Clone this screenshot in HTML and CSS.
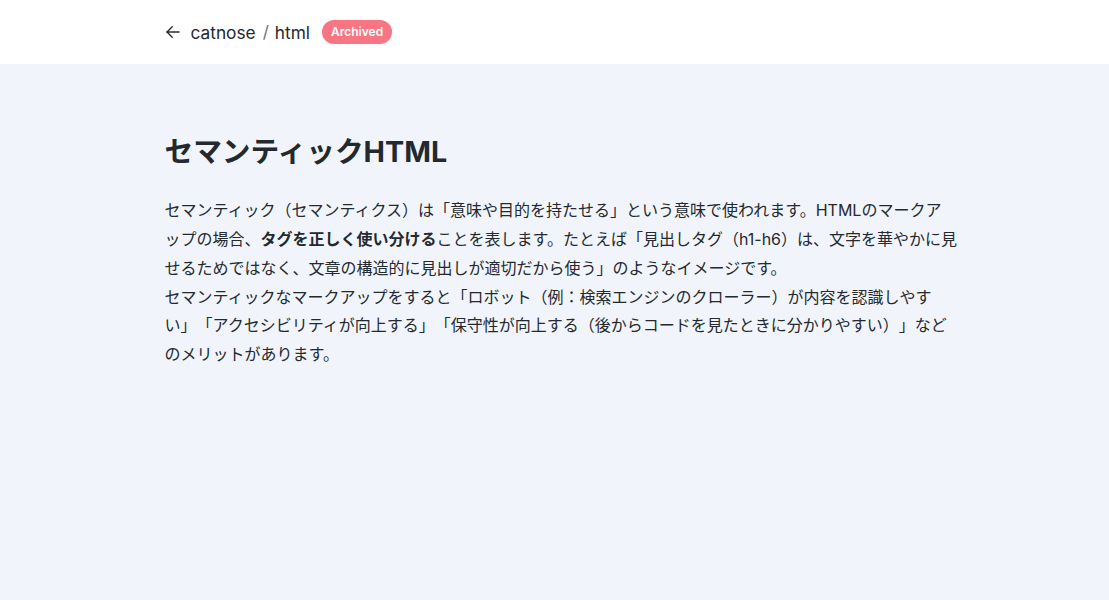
FILE: index.html
```html
<!DOCTYPE html>
<html lang="ja">
<head>
<meta charset="utf-8">
<title>セマンティックHTML</title>
<link rel="stylesheet" href="styles.css">
</head>
<body>
<header class="header">
  <div class="container header-inner">
    <a class="back" href="#" aria-label="back">
      <svg width="18" height="18" viewBox="0 0 24 24" fill="none" stroke="currentColor" stroke-width="1.8" stroke-linecap="round" stroke-linejoin="round"><path d="M20 12H4"/><path d="M11 19l-7-7 7-7"/></svg>
    </a>
    <span class="crumb">catnose</span>
    <span class="sep">/</span>
    <span class="crumb">html</span>
    <span class="badge">Archived</span>
  </div>
</header>
<main class="main">
  <div class="container">
    <h1 class="title">セマンティックHTML</h1>
    <div class="body">
      <p>セマンティック（セマンティクス）は「意味や目的を持たせる」という意味で使われます。HTMLのマークアップの場合、<strong>タグを正しく使い分ける</strong>ことを表します。たとえば「見出しタグ（h1-h6）は、文字を華やかに見せるためではなく、文章の構造的に見出しが適切だから使う」のようなイメージです。</p>
      <p>セマンティックなマークアップをすると「ロボット（例：検索エンジンのクローラー）が内容を認識しやすい」「アクセシビリティが向上する」「保守性が向上する（後からコードを見たときに分かりやすい）」などのメリットがあります。</p>
    </div>
  </div>
</main>
</body>
</html>
```
FILE: styles.css
```css
html, body { margin: 0; padding: 0; }
body {
  font-family: Inter, "Noto Sans CJK JP", sans-serif;
  color: #24292f;
  background: #f1f5fb;
  min-height: 600px;
  text-spacing-trim: space-all;
}
.container {
  max-width: 820px;
  margin: 0 auto;
  padding: 0 0 0 20px;
  box-sizing: border-box;
}
.header {
  background: #fff;
  height: 64px;
}
.header-inner {
  display: flex;
  align-items: center;
  height: 64px;
}
.back {
  color: #24292f;
  display: flex;
  align-items: center;
  margin-left: -1px;
  margin-right: 9px;
}
.crumb {
  font-size: 17.3px;
  font-weight: 400;
}
.sep {
  font-size: 17px;
  color: #6b7280;
  margin: 0 6px 0 7px;
}
.badge {
  margin-left: 12px;
  background: #f87583;
  color: #fff;
  font-size: 12px;
  font-weight: 600;
  line-height: 24px;
  height: 24px;
  padding: 0 9px;
  border-radius: 12px;
}
.main { padding-top: 68px; }
.title {
  font-size: 28.7px;
  font-weight: 700;
  margin: 0 0 24px;
  line-height: 1.4;
}
.body {
  max-width: 792.7px;
}
.body p {
  margin: 0;
  font-size: 16px;
  line-height: 1.8;
}
.body strong { font-weight: 700; }
```
